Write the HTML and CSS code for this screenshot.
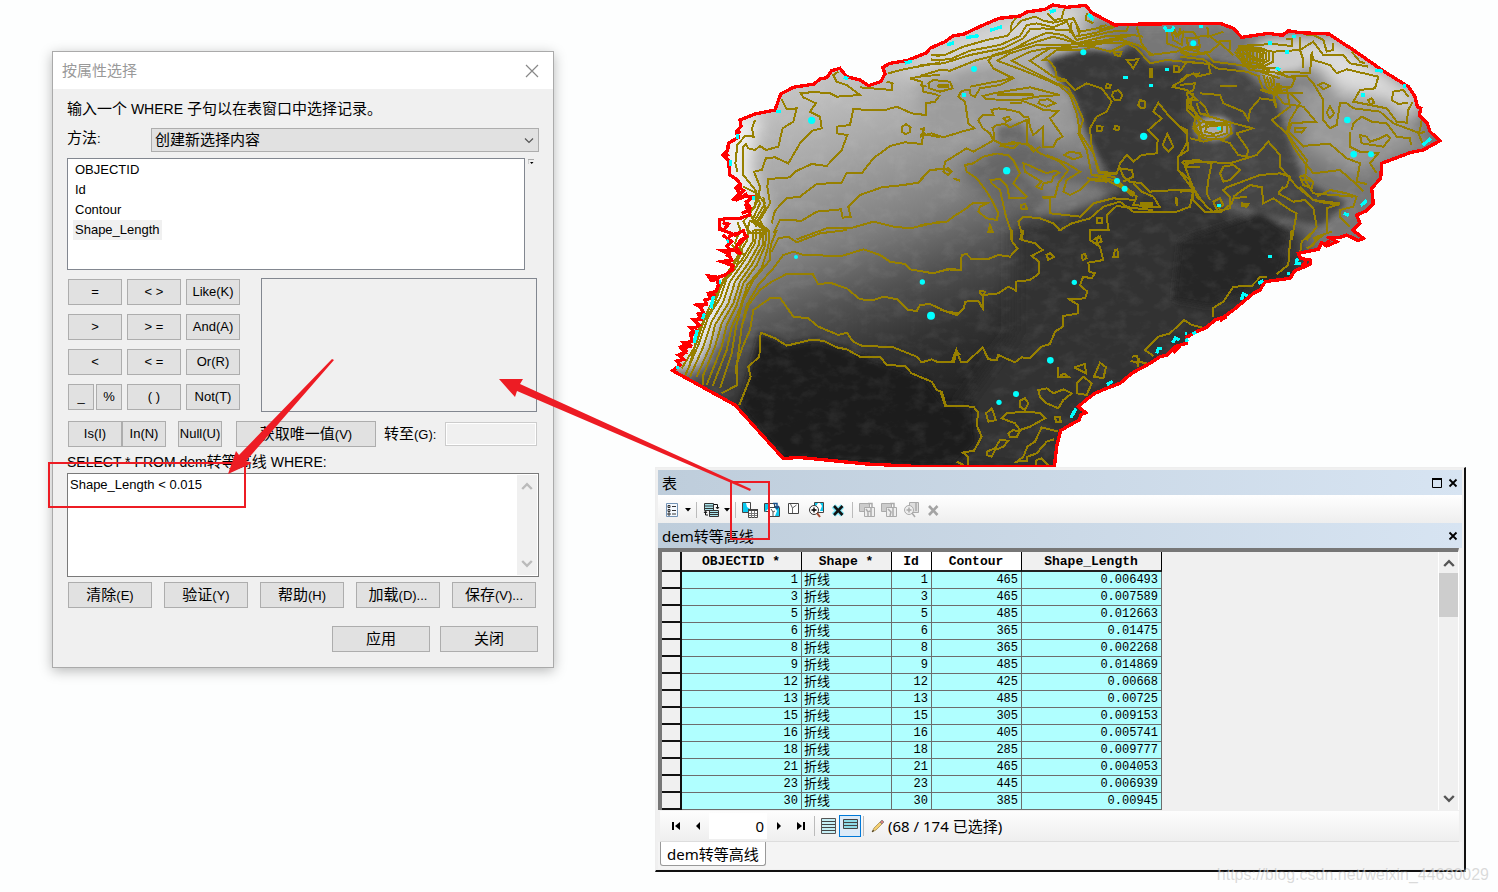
FILE: index.html
```html
<!DOCTYPE html>
<html lang="zh-CN">
<head>
<meta charset="utf-8">
<title>按属性选择</title>
<link rel="stylesheet" href="styles.css">
</head>
<body>
<svg class="defs" aria-hidden="true">
  <symbol id="x-thin" viewBox="0 0 14 14"><path d="M1 1L13 13M13 1L1 13" fill="none" stroke="#888" stroke-width="1.2"/></symbol>
  <symbol id="x-small" viewBox="0 0 10 10"><path d="M1.500 1.500L8.500 8.500M8.500 1.500L1.500 8.500" fill="none" stroke="#000" stroke-width="1.800"/></symbol>
  <symbol id="chev-up" viewBox="0 0 10 8"><path d="M1 6.500L5 2.500L9 6.500" fill="none" stroke="currentColor" stroke-width="2"/></symbol>
  <symbol id="chev-down" viewBox="0 0 10 8"><path d="M1 1.500L5 5.500L9 1.500" fill="none" stroke="currentColor" stroke-width="2"/></symbol>
  <symbol id="caret" viewBox="0 0 6 4"><path d="M0 0H6L3 3.500Z"/></symbol>
</svg>
<main class="stage">
  <section class="dialog" aria-labelledby="dlg-title">
    <header class="dialog-title">
      <h1 id="dlg-title">按属性选择</h1>
      <button class="plain" aria-label="关闭窗口"><svg width="14" height="14"><use href="#x-thin"/></svg></button>
    </header>
    <div class="dialog-body">
      <p class="intro"><span class="zh">输入一个</span> WHERE <span class="zh">子句以在表窗口中选择记录。</span></p>
      <div class="method">
        <label for="method"><span class="zh">方法</span>:</label>
        <span class="select-wrap">
          <select id="method"><option>创建新选择内容</option></select>
          <svg width="10" height="8" viewBox="0 0 10 8"><path d="M1 1.500L5 5.500L9 1.500" fill="none" stroke="#555" stroke-width="1.200"/></svg>
        </span>
      </div>
      <div class="fields">
        <ul class="field-list" role="listbox" aria-label="字段">
          <li role="option">OBJECTID</li>
          <li role="option">Id</li>
          <li role="option">Contour</li>
          <li role="option" aria-selected="true">Shape_Length</li>
        </ul>
        <button class="plain field-menu" aria-label="字段选项"><svg width="6" height="6" viewBox="0 0 6 6"><path d="M0 5V.5H6" fill="none" stroke="#aaa"/><path d="M2 3H5.500L3.700 5Z"/></svg></button>
      </div>
      <div class="builder">
        <div class="ops">
          <button>=</button><button>&lt; &gt;</button><button>Like(K)</button>
          <button>&gt;</button><button>&gt; =</button><button>And(A)</button>
          <button>&lt;</button><button>&lt; =</button><button>Or(R)</button>
          <span class="pair"><button>_</button><button>%</button></span><button>( )</button><button>Not(T)</button>
        </div>
        <div class="values" role="listbox" aria-label="唯一值"></div>
      </div>
      <div class="unique">
        <button class="is">Is(I)</button><button class="in">In(N)</button><button class="null">Null(U)</button>
        <button class="get"><span class="zh">获取唯一值</span>(V)</button>
        <label for="goto"><span class="zh">转至</span>(G):</label>
        <input id="goto" type="text" disabled>
      </div>
      <label class="sql" for="where">SELECT * FROM dem<span class="zh">转等高线</span> WHERE:</label>
      <div class="where">
        <textarea id="where" spellcheck="false">Shape_Length &lt; 0.015</textarea>
        <div class="where-bar"><svg width="12" height="10"><use href="#chev-up"/></svg><svg width="12" height="10"><use href="#chev-down"/></svg></div>
      </div>
      <div class="actions">
        <button><span class="zh">清除</span>(E)</button><button><span class="zh">验证</span>(Y)</button><button><span class="zh">帮助</span>(H)</button><button><span class="zh">加载</span>(D)...</button><button><span class="zh">保存</span>(V)...</button>
      </div>
      <div class="closing"><button class="zh">应用</button><button class="zh">关闭</button></div>
    </div>
  </section>

  <div class="workspace">
    <svg class="map" viewBox="-15 0 2433 1401" role="img" aria-label="高程与等高线地图">
      <defs>
        <path id="area" d="M38 1112L60 1095 50 1083 70 1078 55 1065 75 1058 62 1042 85 1040 72 1028 96 1025 92 1000 100 993 90 982 108 982 118 975 100 958 122 958 115 942 130 938 122 922 110 915 138 912 135 900 152 895 145 880 168 875 175 855 172 838 155 842 145 828 175 832 195 825 218 808 212 795 185 785 215 780 205 762 185 752 220 750 243 762 228 742 240 722 258 712 250 692 225 705 200 695 180 688 178 660 200 655 240 655 268 645 270 622 258 605 268 600 275 590 255 588 230 600 222 598 240 580 228 565 240 552 232 540 210 525 205 480 190 465 203 452 205 430 235 412 230 395 243 378 240 360 285 342 345 330 362 282 400 262 462 252 480 237 500 233 515 212 540 205 560 230 600 240 625 257 662 245 675 222 668 202 690 190 740 182 800 158 810 145 855 125 880 107 910 103 970 75 1017 55 1080 48 1100 36 1155 28 1178 15 1220 22 1277 16 1295 38 1340 62 1365 75 1400 73 1620 70 1680 70 1720 85 1745 112 1825 100 1868 106 1885 92 1920 98 2007 102 2080 150 2170 213 2245 260 2265 290 2272 320 2282 325 2278 345 2302 370 2310 395 2340 422 2290 450 2250 458 2165 490 2162 535 2135 565 2140 612 2120 632 2090 645 2100 670 2078 690 2110 715 2095 722 2060 705 2040 712 2010 714 2030 725 2000 738 1985 728 1975 748 1915 760 1922 775 1950 780 1952 792 1935 800 1905 812 1890 835 1815 845 1800 870 1780 880 1750 905 1720 930 1690 952 1665 960 1640 982 1610 995 1580 1012 1578 1030 1545 1040 1520 1065 1500 1070 1470 1090 1415 1120 1380 1150 1340 1165 1305 1180 1280 1198 1255 1220 1277 1238 1262 1245 1258 1260 1230 1275 1202 1292 1190 1340 1183 1401 805 1401 620 1392 415 1372 370 1376 225 1215Z"/>
        <clipPath id="inside"><use href="#area"/></clipPath>
        <linearGradient id="base" gradientUnits="userSpaceOnUse" x1="480" y1="230" x2="860" y2="1230">
          <stop offset="0" stop-color="#c4c4c4"/><stop offset=".2" stop-color="#aaa"/><stop offset=".45" stop-color="#808080"/><stop offset=".62" stop-color="#525252"/><stop offset=".78" stop-color="#333"/><stop offset="1" stop-color="#202020"/>
        </linearGradient>
        <filter id="soft" x="-30%" y="-30%" width="160%" height="160%"><feGaussianBlur stdDeviation="26"/></filter>
        <filter id="edge" x="-10%" y="-10%" width="120%" height="120%"><feGaussianBlur stdDeviation="9"/></filter>
        <filter id="grain" x="0" y="0" width="100%" height="100%"><feTurbulence type="fractalNoise" baseFrequency=".02 .03" numOctaves="5" seed="4"/><feColorMatrix values="0 0 0 0 1  0 0 0 0 1  0 0 0 0 1  2.600 0 0 0 -1.150"/></filter>
      </defs>
      <g clip-path="url(#inside)">
        <rect width="2394" height="1401" fill="url(#base)"/>
        <g filter="url(#soft)">
          <path fill="#f0f0f0" d="M180 360L300 330 270 500 320 640 290 760 120 1100 20 1120 120 780Z"/>
          <path fill="#d8d8d8" d="M780 160L1180 10 1290 30 1240 90 1060 130 860 200 700 230Z"/>
          <path fill="#9c9c9c" d="M780 240L980 190 1180 260 1250 420 1100 380 900 440 780 400Z"/>
          <path fill="#777" d="M1260 50L2360 50 2360 740 1900 780 1560 480 1400 200Z"/>
          <path fill="#333" d="M1060 590L1400 560 1700 620 1950 690 1920 830 1190 1420 860 1400 900 1220 1060 1000Z"/>
          <path fill="#666" d="M960 460L1100 400 1300 560 1340 610 1060 660 900 520Z"/>
          <path fill="#ddd" d="M1800 120L2040 120 2290 300 2240 360 2080 320 1960 190 1840 220Z"/>
          <path fill="#999" d="M1900 250L2200 300 2290 430 2080 520 1930 440Z"/>
        </g>
        <g filter="url(#edge)">
          <path fill="#383838" d="M1160 180L1280 145 1380 160 1420 130 1470 190 1560 190 1600 290 1600 560 1500 590 1340 520 1280 400 1240 290 1190 230Z"/>
          <path fill="#444" d="M1560 170L1720 190 1850 300 1880 400 1930 540 2060 610 1980 680 1800 640 1600 560Z"/>
          <path fill="#272727" d="M1800 640L1890 700 1860 830 1650 920 1540 900 1560 720Z"/>
          <path fill="#1b1b1b" d="M300 1000L380 1035 470 1020 600 1065 700 1100 790 1130 850 1210 940 1215 950 1330 880 1400 370 1376 240 1220Z"/>
          <path fill="#6a6a6a" d="M1008 380L1090 370 1100 425 1015 430Z"/>
          <ellipse cx="1660" cy="385" rx="54" ry="32" fill="#aaa"/>
          <path fill="#ccc" d="M1790 130L1930 140 1920 200 1860 210 1820 240Z"/>
          <path fill="#999" d="M1060 500L1200 540 1380 570 1200 650 1120 640 1160 590Z" opacity=".4"/>
        </g>
        <rect width="2394" height="1401" filter="url(#grain)" opacity=".06"/>
      </g>
      <g class="contour">
        <path d="M285 360L276 385 281 410 255 408 232 435 226 490 232 515M365 298L380 328 410 325 400 365 368 385 355 440 318 450 300 438 285 450 265 445 258 432 250 440 250 525 290 575M535 215L520 225 530 245 560 255 600 285 530 290 510 280 460 276 422 280 430 292 468 310 450 335 480 350 485 385 458 392 420 430 385 490 345 472 318 475 305 510 282 515 300 560 295 600 270 640 290 680"/>
        <path d="M600 262L695 270 698 250 680 245M840 285L825 305 798 310 797 345 755 340 710 320 675 330 580 328 570 375 530 380 532 400 562 405 545 450 500 498 455 492 405 515 390 532 325 537 322 560 330 610 300 660 320 700M840 412L790 402 785 432 735 427 690 438 640 475 605 520 560 518 545 548 470 552 420 590 380 595 345 632 335 670M780 388L792 385 788 405M840 507L810 510 775 548 730 555 665 562 600 585 565 620 572 650 548 653 543 628 470 635 425 662 360 660 340 700M840 665L750 685 700 680 640 665 570 685 500 685 410 718"/>
        <path d="M738 373L752 382 750 396 736 403 726 395 726 380ZM232 665L245 700M270 660L262 690 282 705M285 575L300 610 275 665 315 690 300 715M250 560L290 580 285 620 250 665 270 700M290 580L315 610 285 660 325 690M310 590L315 625 290 668 315 690M283 690L318 690M278 698L320 702M685 220L730 208 800 195 840 188M815 165L840 168M812 178L840 182M840 225L790 228 750 235 785 245 790 275 835 285"/>
      </g>
      <g class="contour" transform="translate(0 690)">
        <path d="M265 0L262 30 235 75 205 125 175 180 140 250 105 350 65 415M280 0L278 35 245 90 200 145 180 205 145 260 115 345 75 438M290 0L285 40 255 90 210 155 190 215 155 275 130 350 90 440M300 0L298 42 265 100 225 155 205 220 165 285 150 350 110 440M310 0L308 45 275 105 240 155 220 220 185 280 165 350 128 440 128 465M320 0L315 48 290 105 250 160 230 225 200 285 185 350 140 465M328 0L325 50 305 115 262 165 240 235 215 290 200 360 158 468"/>
        <path d="M350 0L332 45 330 90 280 150 250 210 228 290 215 370 180 475M240 0L225 40 245 70 220 105 190 150 160 230 120 290 90 400M215 45L240 70 230 110 185 165M255 25L240 50 250 75M560 0L480 10 410 37 385 20 355 25 335 65M900 120L860 118 820 130 750 118 735 102 690 95 660 75 610 58 545 78 430 75 400 65 370 75 340 115 295 165 260 225 245 290 230 410 232 465 185 490"/>
        <path d="M900 250L860 245 810 222 780 225 770 243 745 240 712 208 670 200 640 210 600 208 560 175 510 158 475 163 458 132 380 132 335 155 300 180 265 225 245 290M900 375L888 362 875 397 830 395 815 388 785 397 770 380 700 352 605 347 580 335 560 308 535 315 475 290 445 265 400 260 360 203 330 205 280 240 270 300 248 350 228 410 232 465M900 527L858 527 845 485 830 480 815 455 755 430 735 408 680 405 662 382 600 380 560 358 530 352 490 332 450 330 380 347 345 325 302 308 298 380 265 410 272 440 238 525"/>
      </g>
      <g class="contour" transform="translate(780 0)">
        <path d="M32 165L75 165 130 140 200 120 260 108 305 62 345 50 370 62 400 68 460 55 480 95 530 85 560 75M32 180L90 178 150 152 240 135 300 108 320 75 350 70 400 82 440 65 465 110 530 98 585 80M0 195L70 190 150 165 250 145 310 115 330 88 370 85 420 90 450 90 470 120 570 95 620 92 625 75M0 228L60 210 90 212 170 180 260 158 330 120 380 98 430 105 470 130 560 108 640 105"/>
        <path d="M272 95L275 70 290 52M382 40L405 62M432 28L425 55 405 60M500 40L498 60 520 70M585 75L540 90 545 75M470 80L480 110M455 65L450 100M280 229L255 240 200 250 150 260M0 255L20 260"/>
        <path d="M640 105L560 120 480 132 400 110 350 125 290 145 220 165 205 182 220 205 280 235 240 255 180 265 165 290 152 285 150 270 125 272 115 290 135 305 145 370 163 385 125 395 70 412 35 400 0 410"/>
        <path d="M650 80L665 130 690 165 770 155 800 140 840 148M670 110L640 105 600 115 520 125 440 135 350 135 270 160 232 182 320 215 380 240 420 258 450 285 470 340 480 400 520 460 540 520 590 522M625 130L550 130 500 138 380 145 330 155 275 182 350 220 410 250 445 265 465 300 490 360 475 400 500 450 515 525 580 540 640 590M700 165L660 138 600 118 520 132 440 145 390 145 330 182 400 230 440 240"/>
        <path d="M412 240L405 205 388 182 370 180 410 150 490 150 515 140 570 155 620 130 650 145 690 190 740 180 840 190M410 240L440 245 465 270 500 250 545 265 575 305 560 335 530 350 510 385 515 440 535 515 590 520"/>
        <path d="M25 250L40 240 90 245 98 265 60 275 28 265ZM52 258L88 258M55 255H88M55 262H86M190 288L230 278 330 262 420 285 350 290 300 300 200 298ZM235 282H340M232 286H342M360 300L385 298 405 310 380 320 355 310ZM270 309H305M175 360L190 345 220 345 215 330 235 325 270 330 300 338 310 350 325 350 330 380 340 405 370 380 370 440 400 440 410 420 428 410 390 355 415 333 370 330 340 315 300 300"/>
        <path d="M250 355L265 350 272 358 258 365ZM175 360L188 385 210 400 220 420 245 432 300 430 325 435 340 455 360 440M215 385L230 375 255 372 270 382 320 360 322 430 360 460 420 485 445 510 415 550 405 590 365 592 390 595 390 640 480 650 520 610 580 595 645 600M220 385L222 420 205 430 160 455 140 445 100 470 75 485 70 515 85 525 95 515 85 505 60 508 30 510 0 540M245 438L280 425 295 432 280 445Z"/>
        <path d="M235 462L265 465 280 480 300 520 280 550 320 590 315 595 268 595 262 560 240 537 212 540 215 550 240 570 258 650 272 690 272 720M233 460L190 470 160 490 135 495 140 515 170 535 200 575 215 600 235 640 230 660 200 655 175 635 180 620 200 610 160 608 135 628 100 650 80 665 0 675M210 675L218 695 205 695Z"/>
        <path d="M310 490L325 495 380 520 405 512 418 518 400 530 395 545 370 550 365 568 350 560 365 545 315 515ZM432 465L450 455 480 460 485 470 460 478ZM380 465L440 490 480 515 440 540 430 575 450 585 480 570 510 540 560 545M300 720L305 700 295 665 310 650 360 655 400 670 420 690 455 670 510 655 550 620 600 605 640 635 770 635 810 620 820 570M510 720L510 690 565 690 560 645 590 618 650 625 700 630"/>
        <path d="M302 615L315 612 322 628 305 628ZM530 655L545 655 547 670 530 670ZM520 720L535 710 545 720M535 520L590 520 600 490 620 465 640 485 665 465 710 460 713 420 685 390 725 355 700 335 715 308 740 340 800 400 805 450 775 470 775 510 820 570 720 572 690 575 665 550 630 545 610 530 600 505 635 510 640 530 610 545M500 535L560 540 620 570 650 590 640 615 720 622 700 590 665 575 640 550M515 525L580 530 610 560 645 580M660 610H700M660 616H700M665 621H698"/>
        <path d="M580 275L595 270 607 285 600 300 585 300 576 288ZM560 252L572 255 570 265 558 263ZM620 180L655 178 640 205ZM660 300L675 305 675 322 665 325 655 315ZM530 378L548 380 545 392 532 392ZM585 378L598 380 595 390 583 388ZM742 402L760 440 745 455 728 435ZM691 205V235M696 205V235M762 198L778 200 778 215 762 215ZM582 155L605 155 600 168 585 165ZM767 592V612M771 595V618M5 385L12 400 0 405"/>
        <path d="M740 95L740 130 780 145 840 155M755 95L760 120 785 135 790 95 770 110 755 90M760 85L775 110 780 85M800 115L835 115 840 140 805 140ZM755 260L790 240 800 225 840 220M755 260L800 270 830 300 800 300 800 320 830 340 820 380 840 400M785 485L840 480M785 485L800 500 840 500M820 560L830 590 840 600M70 505L92 515M100 535L120 542"/>
      </g>
      <g class="contour" transform="translate(1560 0)">
        <path d="M82 80L85 110 130 95M0 95L40 95 50 110 90 108 110 125 150 122 150 150M0 150L40 165 80 160 100 185 180 195 230 205M0 170L70 178 110 205 200 215 240 230M20 115L55 115 60 140 25 145ZM0 155L20 165 90 155 120 130 160 165M120 258H170M0 215L20 185 85 192 92 220 50 230 40 220 0 240M0 255L45 250 40 270 20 280 30 310 50 345 60 380"/>
        <path d="M175 138L280 132 335 138 335 118 318 118M170 148L250 150 280 155 280 185 250 200 200 195 170 148M178 138L245 145 268 155 268 180 245 192 205 188 178 155ZM185 142L240 150 258 160 258 178 235 184 212 176 188 155ZM192 148L232 155 250 165 235 178 215 168ZM168 165L200 200 290 205M165 155L190 190 270 212M180 175L210 210 260 215 310 220M200 140V180M210 140V185M220 140V190M190 140V170M230 145V195M240 145V205M180 140V168M250 160V212"/>
        <path d="M280 155L360 150 400 125 430 165 490 165 510 190 565 200M360 110L360 150 370 180 368 205M290 220L330 215 390 220 395 155 400 180 450 195 470 220 500 208 595 230 585 265 540 270 520 305 620 325 650 365 680 368 685 330 698 305M370 103L400 105 430 120 440 155 460 150 460 130M515 155L540 185 555 190M290 208L320 230 380 228 400 250 430 300 430 360 450 385 470 375 480 310 500 310 520 325 600 335 640 370 720 400 735 395"/>
        <path d="M250 225L260 260 280 280 315 270 330 262M260 230L270 262 290 275M270 230L278 262M280 232L285 270M235 230L250 270 300 280 370 280M290 220L345 235 335 260 300 262 290 275M240 215L300 235M292 250V275M298 250V272M304 256V272"/>
        <path d="M415 255L430 248 450 258 430 268ZM450 318L462 340 450 355 440 338ZM565 300L575 295 583 308 570 313ZM685 290L670 270 640 275 635 300 655 312 685 308M240 270L290 285 310 310 370 320 408 365 360 368 335 370 325 395 370 440 390 435 450 432 500 475 540 490 530 545 560 552M345 385L375 385 365 398 345 395ZM515 390L520 370 545 350 575 365 620 370 650 410 690 415 693 435M510 395L510 440 540 455 595 460 570 490 590 520M540 405L560 410 570 425 600 415 620 405 630 415 610 440 545 430ZM725 360L720 390 715 400 730 435"/>
        <path d="M320 270L330 320 290 350 275 360 320 400 340 440 360 470 400 520 480 510 520 545 550 575M330 280L360 310 330 360 320 400 350 440 380 480 375 540 400 580 520 590M360 530L375 525 400 545 395 565 370 555ZM365 540L395 542M300 570L320 560 330 530 300 520 240 525 200 540 140 562 130 570 150 590 150 625 100 635 80 620 60 595 40 565 15 500 40 480 95 490 85 540 80 580 90 600"/>
        <path d="M60 280L120 285 130 310 190 335 205 360 210 330 240 295 280 300 290 325 280 280M50 310L60 340 90 350 160 370 218 385 170 400 205 450 200 470 175 465 150 430 110 415 70 425 30 415M40 280L30 320 55 350 80 370 150 375 155 400 130 418 70 415 50 400 40 385 70 365 140 370 140 400 110 410 65 405 60 385 90 370 125 375 125 395 100 402 75 395 80 380 115 378M60 305L75 320 85 345 65 340M30 295L20 330 50 360M45 370L60 420M55 365L70 415"/>
        <path d="M120 520L130 500 160 495 180 510 150 540 130 545ZM0 380L20 390 20 430 0 465M0 515L30 540 40 590 40 600 75 635 125 635 155 610 160 595 200 590M0 575L40 572M15 490L70 485 150 490 230 465 265 425 300 465 300 500 350 560 400 600 480 610M180 575L210 555 245 562 250 610 280 595 330 630 350 640 335 720M185 610L205 612 200 620 185 618ZM295 580L340 605 375 600 400 625 410 680 380 720M310 560L295 580M360 560L400 600 440 610 480 612 440 625 440 700 400 715M410 590L450 570 500 580 530 590 520 620 480 630 480 650 510 680M100 605L120 595 130 615 110 628ZM160 590L180 575"/>
      </g>
      <g class="contour" transform="translate(840 690)">
        <path d="M215 0L217 35 232 55 210 80 175 75 145 87 95 88 80 72 65 75 62 120 35 117 0 124M250 0L245 30 285 40 308 60 275 78 298 95 298 130 270 150 228 155 228 182 205 170 175 190 130 195 128 235 115 212 75 215 72 235 50 255 0 238M120 182L135 185 130 197 120 190ZM510 0H450V30L480 50 490 90 445 98 448 125 465 130 455 145 430 140 420 165 442 185 435 205 388 208 415 225 415 250 370 258 368 290 345 305 330 342 305 350 270 385 245 382 225 397 175 375 170 390 145 388 128 352 80 397 62 395 50 362 42 397 0 397"/>
        <path d="M320 75L330 70 342 80 325 90ZM425 75L435 72 440 85 428 90ZM470 25L480 20 485 35 470 40ZM525 60L532 58 535 82 520 80ZM355 0H365M145 0L155 8M0 482L15 527 100 530 113 545 112 590 125 620 102 662 68 668 85 680 82 710M50 695L70 705M155 535L168 570 145 575 138 550ZM185 565L200 550 250 545 270 545 300 550 315 565 270 590 240 600 225 580ZM240 512L255 505 265 520 255 540 240 530ZM205 610L220 600 238 605 230 622 210 622ZM140 665L165 655 180 630 205 632 190 650 165 660 155 680 140 675Z"/>
        <path d="M295 480L320 475 340 490 370 478 395 490 370 510 355 535 320 520 300 500ZM345 562L360 560 362 575 348 575ZM355 412V440L385 440 375 432 360 435M402 412L435 402 438 430 402 412M410 460L430 440 455 460 440 495 410 490ZM462 440L480 398 498 412 490 445ZM355 605L305 592 285 635 262 650 250 680 230 695 260 692 262 680 290 670 320 635 342 628M285 711L290 690 305 685 325 705M575 380L592 378 595 410M595 395L620 400M572 392L590 398 600 385"/>
        <path d="M640 378L615 360 655 320 690 310 732 270 755 285 785 292M820 260L818 235 850 215 880 170 935 168 960 142 980 142M1055 0L1048 60 1045 105 1010 132M1125 0L1085 35 1080 70M1175 5L1130 20 1120 45 1100 55M1150 15L1130 30 1110 50"/>
      </g>
      <use href="#area" class="rim"/>
      <path class="rim" d="M60 1070L78 1052 68 1038 90 1030M72 1045L92 1036 84 1026M92 1008L112 988M108 962L126 946M126 918L142 906M152 890L166 882M152 834L168 840M190 782L212 792 222 802M200 770L212 752 200 738 215 725 188 705M235 735L252 718 262 706M192 690L205 672 188 668M205 710L228 700M245 640L264 632 256 612M235 590L250 572 236 560M228 562L246 556M244 592L262 580M196 472L206 462M230 406L240 392M1990 735L2010 722M1940 785L1925 798M1700 950L1680 962M1560 1040L1540 1058"/>
      <g class="picked">
        <path d="M348 335H362M551 232L565 236M734 189L756 184M232 402V418M211 480V497M281 587V600M862 135L882 128M918 113L956 107M990 91L1026 80M1170 36L1188 30M1285 42L1300 60M907 285H919M1390 233H1404M1468 257H1480M1516 208H1528M1593 130H1606M1618 80H1630M1825 129H1836M1895 110H1908M1876 156H1886M1848 203L1860 210M2146 210L2168 214M2228 258H2238M2104 285H2116M2288 436L2312 415M2102 617L2120 602M2052 640L2066 646M1670 386H1684M1670 616H1684M1512 80L1520 92 1536 92 1542 80M160 888L153 925M133 940L127 958M112 990L102 1028M52 1098V1108M176 846H184M200 725L206 722M1824 770H1836M1880 820H1890M1908 795L1912 775M1918 795V785M1795 850L1810 842M1744 900L1750 882 1762 888M1575 1000H1582M1598 1002L1608 996M1538 1028L1546 1014 1558 1020M1575 1024L1585 1018M1490 1060L1495 1046 1505 1046M1340 1154L1358 1144M1232 1254L1248 1226"/>
      </g>
      <g fill="#0ff">
        <circle cx="455" cy="361" r="11"/><circle cx="942" cy="207" r="9"/><circle cx="1270" cy="157" r="9"/><circle cx="1040" cy="512" r="11"/><circle cx="1451" cy="409" r="11"/><circle cx="1371" cy="543" r="9"/><circle cx="1394" cy="566" r="9"/><circle cx="1600" cy="130" r="9"/><circle cx="2062" cy="360" r="10"/><circle cx="2081" cy="463" r="10"/><circle cx="2133" cy="463" r="9"/><circle cx="408" cy="771" r="6"/><circle cx="787" cy="846" r="8"/><circle cx="813" cy="947" r="12"/><circle cx="1243" cy="847" r="8"/><circle cx="1171" cy="1081" r="10"/><circle cx="1068" cy="1182" r="9"/><circle cx="1017" cy="1207" r="8"/>
      </g>
    </svg>

    <section class="table-window" aria-label="表">
      <header class="bar"><h2>表</h2>
        <button class="plain" aria-label="最大化"><svg width="10" height="10" viewBox="0 0 10 10"><path d="M.5 1V9.500H9.500V1" fill="none" stroke="#000"/><path d="M0 1H10" stroke="#000" stroke-width="2"/></svg></button>
        <button class="plain" aria-label="关闭表窗口"><svg width="10" height="10"><use href="#x-small"/></svg></button>
      </header>
      <div class="tools" role="toolbar" aria-label="表工具">
        <button aria-label="表选项"><svg width="14" height="16" viewBox="0 0 14 16"><path d="M1.500 1.500H12.500V14.500H1.500Z" fill="#f4f9ff" stroke="#7393b5"/><path d="M3 3.500h2v2H3ZM3 7.500h2v2H3ZM3 11h2v2H3ZM7 4.500h4M7 8.500h4M7 12h4" fill="none" stroke="#333"/></svg></button>
        <button class="drop" aria-label="更多表选项"><svg width="6" height="4"><use href="#caret"/></svg></button><i></i>
        <button aria-label="关联表"><svg width="17" height="16" viewBox="0 0 17 16"><path d="M1.500 1.500H10.500V8.500H1.500ZM6.500 8.500H15.500V14.500H6.500Z" fill="#a8e4ec" stroke="#333"/><path d="M1 4H10M1 6.500H10M6 10.500H15M6 12.500H15" stroke="#333"/><path d="M11 2.500H14.500V6M13 5L14.500 7 16 5M5 13H2.500V10M1 11L2.500 9 4 11" fill="none" stroke="#111"/></svg></button>
        <button class="drop" aria-label="更多关联选项"><svg width="6" height="4"><use href="#caret"/></svg></button><i></i>
        <button aria-label="按属性选择"><svg width="18" height="18" viewBox="0 0 18 18"><path d="M1.500 1.500H9.500V11.500H1.500Z" fill="#fff" stroke="#444"/><path d="M2 2H5L6 6 9 8V11H2Z" fill="#0ac8ef"/><path d="M7.500 8.500H16.500V16.500H7.500Z" fill="#fff" stroke="#444"/><path d="M7 9H17" stroke="#444" stroke-width="2"/><path d="M10.500 10V17M13.500 10V17M8 12.500H16M8 14.500H16" stroke="#777"/></svg></button>
        <button aria-label="切换选择"><svg width="18" height="18" viewBox="0 0 18 18"><path d="M1.500 2.500H11.500V10.500H1.500Z" fill="#fff" stroke="#444"/><path d="M2 3H6L5 8 2 11Z" fill="#0ac8ef"/><path d="M6.500 6.500H16.500V15.500H6.500Z" fill="#fff" stroke="#444"/><path d="M12 7L14 10 12 15H16V7Z" fill="#0ac8ef"/><path d="M8 8L10 11 12 10M10 11V15" fill="none" stroke="#555"/><path d="M10 2.500H14V6M12 5L14 7.500 16 5" fill="none" stroke="#174f8c" stroke-width="1.500"/></svg></button>
        <button aria-label="清除选择"><svg width="12" height="18" viewBox="0 0 12 18"><path d="M.5 2.500H10.500V12.500H.5Z" fill="#fff" stroke="#444"/><path d="M2.500 3L4.500 7 8.500 4M4.500 7V12" fill="none" stroke="#666"/></svg></button>
        <button aria-label="缩放至所选项"><svg width="17" height="18" viewBox="0 0 17 18"><path d="M6.500 1.500H15.500V11.500H6.500Z" fill="#fff" stroke="#444"/><path d="M12 2L14 5 12 10H15V2ZM7 2H10L8 5H7Z" fill="#0ac8ef"/><circle cx="6" cy="9" r="4.500" fill="#fff" stroke="#333"/><path d="M3.500 9H8.500M6 6.500V11.500" stroke="#000" stroke-width="1.300"/><path d="M9 12L12 16" stroke="#a54a30" stroke-width="2"/></svg></button>
        <button aria-label="删除所选项"><svg width="14" height="16" viewBox="0 0 14 16"><path d="M2.500 4L11.500 13M11.500 4L2.500 13" stroke="#7ce6f7" stroke-width="5"/><path d="M3 4L11.500 13M11.500 4L3 13" stroke="#111" stroke-width="2.600"/></svg></button><i></i>
        <button disabled aria-label="切换高亮"><svg width="18" height="18" viewBox="0 0 18 18"><path d="M1.500 2.500H11.500V10.500H1.500Z" fill="#ccc" stroke="#aaa"/><path d="M6.500 6.500H16.500V15.500H6.500Z" fill="#eee" stroke="#aaa"/><path d="M8 8L10 11 12 10M10 11V15M13 7V15M10 2.500H14V6" fill="none" stroke="#aaa" stroke-width="1.500"/></svg></button>
        <button disabled aria-label="取消选择高亮"><svg width="18" height="18" viewBox="0 0 18 18"><path d="M1.500 2.500H11.500V10.500H1.500Z" fill="#ccc" stroke="#aaa"/><path d="M6.500 6.500H16.500V15.500H6.500Z" fill="#eee" stroke="#aaa"/><path d="M8 8L11 11 10 15M13 7V15M10 2.500H14V6" fill="none" stroke="#aaa" stroke-width="1.500"/></svg></button>
        <button disabled aria-label="缩放至高亮"><svg width="17" height="18" viewBox="0 0 17 18"><path d="M6.500 1.500H15.500V11.500H6.500Z" fill="#ddd" stroke="#aaa"/><circle cx="6" cy="9" r="4.500" fill="#eee" stroke="#aaa"/><path d="M3.500 9H8.500M6 6.500V11.500M9 12L12 16M13 2V10" stroke="#aaa" stroke-width="1.500"/></svg></button>
        <button disabled aria-label="删除高亮"><svg width="14" height="16" viewBox="0 0 14 16"><path d="M3 4L11.500 13M11.500 4L3 13" stroke="#a4a4a4" stroke-width="2.600"/></svg></button>
      </div>
      <div class="bar"><h3>dem转等高线</h3>
        <button class="plain" aria-label="关闭图层表"><svg width="10" height="10"><use href="#x-small"/></svg></button>
      </div>
      <div class="sheet">
        <table>
          <colgroup><col class="c-head"><col class="c-oid"><col class="c-shape"><col class="c-id"><col class="c-contour"><col class="c-length"></colgroup>
          <thead><tr><td></td><th>OBJECTID *</th><th>Shape *</th><th class="white">Id</th><th class="white">Contour</th><th>Shape_Length</th></tr></thead>
          <tbody>
            <tr><td></td><td>1</td><td>折线</td><td>1</td><td>465</td><td>0.006493</td></tr>
            <tr><td></td><td>3</td><td>折线</td><td>3</td><td>465</td><td>0.007589</td></tr>
            <tr><td></td><td>5</td><td>折线</td><td>5</td><td>485</td><td>0.012663</td></tr>
            <tr><td></td><td>6</td><td>折线</td><td>6</td><td>365</td><td>0.01475</td></tr>
            <tr><td></td><td>8</td><td>折线</td><td>8</td><td>365</td><td>0.002268</td></tr>
            <tr><td></td><td>9</td><td>折线</td><td>9</td><td>485</td><td>0.014869</td></tr>
            <tr><td></td><td>12</td><td>折线</td><td>12</td><td>425</td><td>0.00668</td></tr>
            <tr><td></td><td>13</td><td>折线</td><td>13</td><td>485</td><td>0.00725</td></tr>
            <tr><td></td><td>15</td><td>折线</td><td>15</td><td>305</td><td>0.009153</td></tr>
            <tr><td></td><td>16</td><td>折线</td><td>16</td><td>405</td><td>0.005741</td></tr>
            <tr><td></td><td>18</td><td>折线</td><td>18</td><td>285</td><td>0.009777</td></tr>
            <tr><td></td><td>21</td><td>折线</td><td>21</td><td>465</td><td>0.004053</td></tr>
            <tr><td></td><td>23</td><td>折线</td><td>23</td><td>445</td><td>0.006939</td></tr>
            <tr><td></td><td>30</td><td>折线</td><td>30</td><td>385</td><td>0.00945</td></tr>
          </tbody>
        </table>
        <div class="sheet-bar"><svg width="12" height="10"><use href="#chev-up"/></svg><b></b><svg width="12" height="10"><use href="#chev-down"/></svg></div>
      </div>
      <div class="nav">
        <button aria-label="第一条"><svg width="10" height="8" viewBox="0 0 10 8"><path d="M1 0H3V8H1ZM9 0V8L4 4Z"/></svg></button>
        <button aria-label="上一条"><svg width="10" height="8" viewBox="0 0 10 8"><path d="M7 0V8L3 4Z"/></svg></button>
        <input type="text" value="0" aria-label="记录">
        <button aria-label="下一条"><svg width="10" height="8" viewBox="0 0 10 8"><path d="M3 0V8L7 4Z"/></svg></button>
        <button aria-label="最后一条"><svg width="10" height="8" viewBox="0 0 10 8"><path d="M7 0H9V8H7ZM1 0V8L6 4Z"/></svg></button><i></i>
        <button aria-label="显示所有记录"><svg width="15" height="16" viewBox="0 0 15 16"><path d="M.5 .5H14.500V15.500H.5Z" fill="#c5eff5" stroke="#555"/><path d="M1 3.500H14M1 6.500H14M1 9.500H14M1 12.500H14" stroke="#444"/></svg></button>
        <button class="on" aria-label="显示所选记录"><svg width="15" height="16" viewBox="0 0 15 16"><path d="M.5 1.500H14.500V10.500H.5Z" fill="#8edbe8" stroke="#444"/><path d="M1 4.500H14M1 7.500H14" stroke="#444"/></svg></button><i></i>
        <svg class="pencil" width="16" height="16" viewBox="0 0 16 16"><path d="M2 14L4 10 10 4 12 6 6 12Z" fill="#f4cf70" stroke="#98814a" stroke-width=".7"/><path d="M10 4L12 2 14 4 12 6Z" fill="#d98080" stroke="#777" stroke-width=".7"/><path d="M2 14L3 12 4 13Z"/></svg>
        <output>(68 / 174 已选择)</output>
      </div>
      <div class="tabs"><button>dem转等高线</button></div>
    </section>
  </div>

  <svg class="marks" viewBox="0 0 1498 892" aria-hidden="true">
    <path class="frame" d="M49 463H245V507H49ZM731 482H769V539H731Z"/>
    <path d="M332 359L239 455 236 451 228 474 252 463 246 461 334 360ZM499 379L523 379 520 384 751 489 750 491 517 391 515 397Z"/>
  </svg>
  <p class="watermark">https://blog.csdn.net/weixin_44630029</p>
</main>
</body>
</html>
```
FILE: styles.css
```css
* { box-sizing: border-box; }
body {
  margin: 0;
  background: #fdfefe;
  color: #000;
  font: 13px/20px "Liberation Sans", Arial, "Noto Sans CJK SC", sans-serif;
}
h1, h2, h3, p, ul { margin: 0; padding: 0; font-weight: 400; }
button, input, select, textarea { font: inherit; color: inherit; margin: 0; border-radius: 0; }
button { padding: 0; white-space: nowrap; }
svg { flex: none; }
.defs { position: absolute; width: 0; height: 0; }
.zh { font-size: 15px; }
.plain { border: 0; background: none; display: grid; place-items: center; }

.stage {
  position: relative;
  display: flex;
  align-items: flex-start;
  gap: 101px;
  min-height: 100vh;
  padding: 0 32px 21px 52px;
}
.workspace { flex: 811 1 0; min-width: 0; }

/* selection dialog */
.dialog {
  flex: 500 1 0;
  min-width: 0;
  margin-top: 51px;
  border: 1px solid #aaa;
  background: #f0f0f0;
  box-shadow: 0 3px 12px rgba(0, 0, 0, .28);
}
.dialog-title {
  display: flex;
  justify-content: space-between;
  align-items: center;
  height: 37px;
  padding: 0 14px 0 9px;
  background: #fff;
}
.dialog-title h1 { font-size: 15px; color: #999; }
.dialog-body { padding: 10px 14px 15px; }
.dialog-body button { height: 26px; border: 1px solid #adadad; background: #e1e1e1; }
.intro, .sql { font-size: 14px; white-space: nowrap; }
.method { display: flex; margin-top: 9px; }
.method label { width: 84px; }
.select-wrap { position: relative; flex: 1; }
.select-wrap select {
  display: block;
  appearance: none;
  width: 100%;
  height: 24px;
  padding: 0 3px;
  border: 1px solid #adadad;
  background: #e1e1e1;
  font-size: 15px;
}
.select-wrap svg { position: absolute; right: 5px; top: 9px; }
.fields { display: flex; gap: 3px; margin-top: 6px; }
.field-list {
  flex: 1;
  height: 112px;
  padding: 1px 5px;
  border: 1px solid #828790;
  background: #fff;
  list-style: none;
}
.field-list li { width: fit-content; padding: 0 2px; }
.field-list [aria-selected] { background: #f0f0f0; }
.dialog-body .field-menu { width: 11px; height: 8px; border: 0; background: none; place-items: center start; }
.builder { display: flex; gap: 21px; margin-top: 8px; padding: 0 2px 0 1px; }
.ops { display: grid; grid-template-columns: repeat(3, 54px); align-content: start; gap: 9px 5px; padding-top: 1px; }
.pair { display: flex; gap: 2px; }
.pair button { flex: 1; }
.values { flex: 1; height: 134px; border: 1px solid #828790; }
.unique { display: flex; align-items: center; margin-top: 9px; padding: 0 2px 0 1px; }
.is { width: 54px; }
.in, .null { width: 44px; }
.null { margin-left: 12px; }
.get { width: 140px; margin-left: 14px; }
.unique label { margin: 0 9px 0 8px; white-space: nowrap; }
.unique input { flex: 1; min-width: 0; height: 24px; border: 1px solid #ccc; background: #f0f0f0; box-shadow: inset 0 0 0 1px #fff; }
.sql { display: block; margin: 5px 0 1px; }
.where { display: flex; height: 104px; padding: 1px; border: 1px solid #7a7a7a; background: #fff; }
.where textarea { flex: 1; min-width: 0; padding: 0 1px; border: 0; outline: 0; resize: none; background: none; }
.where-bar { display: flex; flex-direction: column; justify-content: space-between; align-items: center; width: 20px; padding: 6px 0; background: #f0f0f0; color: #bbb; }
.actions { display: flex; gap: 12px; margin-top: 5px; padding: 0 3px 0 1px; }
.actions button { flex: 1; }
.closing { display: flex; justify-content: flex-end; gap: 10px; margin-top: 18px; padding-right: 1px; }
.closing button { width: 98px; }

/* map */
.map { display: block; width: 100%; }
.contour path { fill: none; stroke: #978000; stroke-width: 6; shape-rendering: crispEdges; }
.rim { fill: none; stroke: #f00; stroke-width: 10; shape-rendering: crispEdges; }
.picked path { fill: none; stroke: #0ff; stroke-width: 10; shape-rendering: crispEdges; }

/* attribute table window */
.table-window {
  padding: 2px 2px 1px;
  border: solid #eee;
  border-width: 1px 2px 2px 1px;
  border-right-color: #111;
  border-bottom-color: #111;
  background: #f0f0f0;
  font: 15px/20px "Noto Sans", "Noto Sans CJK SC", sans-serif;
}
.bar { display: flex; align-items: center; height: 25px; padding: 0 1px 0 4px; background: linear-gradient(90deg, #becddb, #d7e4f2); }
.bar h2, .bar h3 { flex: 1; font-size: 15px; }
.bar .plain { width: 16px; height: 16px; }
.tools { display: flex; align-items: center; height: 28px; padding: 1px 0 0 3px; background: linear-gradient(#fff, #eee); }
.tools button { display: grid; place-items: center; width: 22px; height: 22px; border: 0; background: none; }
.tools .drop { width: 10px; }
.tools i, .nav i { width: 1px; height: 16px; margin: 0 3px; background: #bbb; }
.sheet { display: flex; justify-content: space-between; margin: 0 3px 0 0; border: solid #777; border-width: 4px 1px 0 4px; border-right-color: #fff; }
table { border-spacing: 0; table-layout: fixed; width: 500px; font: 12px/15px "Liberation Mono", "Noto Sans CJK SC", monospace; }
.c-head { width: 20px; }
.c-oid { width: 120px; }
.c-shape, .c-contour { width: 90px; }
.c-id { width: 40px; }
.c-length { width: 140px; }
td, th { height: 17px; padding: 1px 3px 0 2px; border: solid #6d6d6d; border-width: 0 1px 1px 0; background: #b0ffff; text-align: right; overflow: hidden; white-space: nowrap; }
th { height: 20px; border-right: 1px solid #000; border-bottom: 2px solid #222; background: #f0f0f0; font-size: 13px; text-align: center; }
th.white { background: #fff; }
td:first-child { border-right: 2px solid #111; border-bottom: 2px solid #111; background: #f0f0f0; }
tbody td:nth-child(3) { text-align: left; font-size: 13px; }
.sheet-bar { display: flex; flex-direction: column; align-items: center; width: 20px; padding: 6px 0; color: #555; border-left: 1px solid #fff; }
.sheet-bar b { width: 19px; height: 44px; margin: 5px 0 auto; background: #cdcdcd; }
.nav { display: flex; align-items: center; height: 31px; margin: 1px 3px 0 2px; padding-left: 5px; border-bottom: 1px solid #ddd; background: linear-gradient(#fdfdfd, #eee); }
.nav button { display: grid; place-items: center; width: 22px; height: 22px; border: 0; background: none; }
.nav input { width: 58px; height: 26px; margin-right: 1px; padding: 0 3px; border: 0; background: #fff; text-align: right; }
.nav i { margin: 0 2px; height: 20px; }
.nav .on { border: 1px solid #0078d7; background: #dcebf8; }
.nav .pencil { margin: 0 2px 0 4px; }
.nav output { white-space: nowrap; }
.tabs { height: 27px; padding-left: 2px; background: #f4f4f4; }
.tabs button { height: 24px; padding: 0 6px; border: 1px solid #999; border-top: 0; border-radius: 0 0 3px 3px; background: #fff; }

/* annotations */
.marks { position: absolute; left: 0; top: 0; width: 100%; fill: #ed1c24; pointer-events: none; }
.frame { fill: none; stroke: #ed1c24; stroke-width: 2; }
.watermark { position: absolute; right: 9px; bottom: 8px; color: rgba(150, 150, 150, .35); font-size: 16px; text-shadow: 1px 1px 0 rgba(255, 255, 255, .6); }
```
